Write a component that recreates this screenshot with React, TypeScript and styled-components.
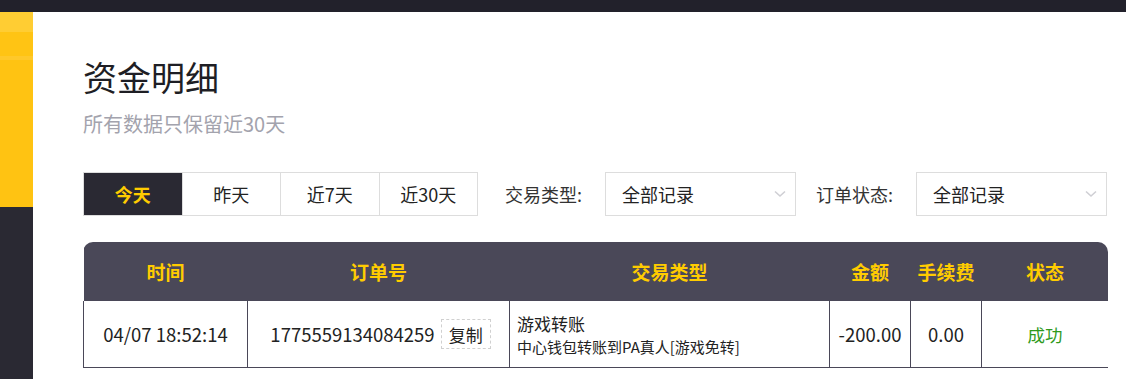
import React from "react";
import styled, { createGlobalStyle } from "styled-components";

const GlobalStyle = createGlobalStyle`
  html, body {
    margin: 0;
    padding: 0;
    background: #fff;
    font-family: "Noto Sans CJK SC", "Noto Sans", "Liberation Sans", sans-serif;
    color: #222;
  }
`;

const TopBar = styled.div`
  height: 12px;
  background: #22212b;
`;

const Layout = styled.div`
  display: flex;
  min-height: 367px;
`;

const Sidebar = styled.aside`
  width: 33px;
  flex-shrink: 0;
  display: flex;
  flex-direction: column;
`;

const SideYellow = styled.div`
  height: 195px;
  background: linear-gradient(
    to bottom,
    #ffcd33 0px,
    #ffcd33 20px,
    #ffc414 20px,
    #ffc414 44px,
    #ffc82a 44px,
    #ffc82a 48px,
    #ffc312 48px
  );
`;

const SideDark = styled.div`
  flex: 1;
  background: #2a2933;
`;

const Main = styled.main`
  flex: 1;
  min-width: 0;
  padding: 44px 0 0 50px;
`;

const Title = styled.h1`
  margin: 0;
  font-size: 34px;
  line-height: 41px;
  font-weight: 400;
  color: #1e1e24;
`;

const SubTitle = styled.p`
  margin: 14px 0 0;
  font-size: 20px;
  line-height: 26px;
  color: #a3a3ad;
`;

const FilterRow = styled.div`
  display: flex;
  align-items: center;
  margin-top: 35px;
  white-space: nowrap;
  & > * {
    flex-shrink: 0;
  }
`;

const Tabs = styled.div`
  display: flex;
  border: 1px solid #dddddd;
`;

const Tab = styled.div<{ $active?: boolean }>`
  width: 97.5px;
  height: 42px;
  display: flex;
  align-items: center;
  justify-content: center;
  font-size: 18px;
  background: ${(p) => (p.$active ? "#2a2933" : "#fff")};
  color: ${(p) => (p.$active ? "#ffcc00" : "#222")};
  font-weight: ${(p) => (p.$active ? 700 : 400)};
  & + & {
    border-left: 1px solid #dddddd;
  }
`;

const Label = styled.span<{ $gap: number }>`
  font-size: 18px;
  color: #333;
  margin: 0 23px 0 ${(p) => p.$gap}px;
`;

const Select = styled.div`
  height: 42px;
  width: 164px;
  border: 1px solid #dddddd;
  display: flex;
  align-items: center;
  justify-content: space-between;
  padding: 0 9px 0 16px;
  font-size: 18px;
  color: #222;
`;

const Chevron = () => (
  <svg width="12" height="8" viewBox="0 0 12 8">
    <path d="M1 1.5 L6 6 L11 1.5" fill="none" stroke="#cfcfd4" strokeWidth="1.6" />
  </svg>
);

const TableWrap = styled.div`
  margin-top: 26px;
  width: 1025px;
  border-radius: 10px 10px 0 0;
  overflow: hidden;
`;

const Table = styled.table`
  width: 100%;
  border-collapse: collapse;
  table-layout: fixed;
`;

const Th = styled.th`
  height: 59px;
  background: #4a4858;
  color: #ffcc00;
  font-size: 19px;
  font-weight: 700;
  padding: 0;
  text-align: center;
`;

const Td = styled.td<{ $align?: string }>`
  height: 66px;
  border: 1px solid #4a4858;
  border-top: none;
  padding: 0;
  text-align: ${(p) => p.$align || "center"};
  font-size: 18.5px;
  color: #222;
`;

const OrderCell = styled.div`
  display: flex;
  align-items: center;
  justify-content: center;
  gap: 6px;
  padding-left: 4px;
`;

const CopyButton = styled.span`
  display: inline-flex;
  align-items: center;
  justify-content: center;
  width: 48px;
  height: 28px;
  border: 1px dashed #d0d0d0;
  font-size: 17px;
  color: #222;
`;

const TypeCell = styled.div`
  padding: 0 7px;
  display: flex;
  flex-direction: column;
  gap: 2px;
`;

const TypeMain = styled.span`
  font-size: 17px;
  line-height: 23px;
`;

const TypeSub = styled.span`
  font-size: 15px;
  line-height: 20px;
`;

const Status = styled.span`
  color: #2f9a1d;
  font-size: 17.5px;
`;

const cols = [164, 262, 320, 81, 71, 127];
const tabs = ["今天", "昨天", "近7天", "近30天"];

export default function App() {
  return (
    <>
      <GlobalStyle />
      <TopBar />
      <Layout>
        <Sidebar>
          <SideYellow />
          <SideDark />
        </Sidebar>
        <Main>
          <Title>资金明细</Title>
          <SubTitle>所有数据只保留近30天</SubTitle>
          <FilterRow>
            <Tabs>
              {tabs.map((t, i) => (
                <Tab key={t} $active={i === 0}>
                  {t}
                </Tab>
              ))}
            </Tabs>
            <Label $gap={27}>交易类型:</Label>
            <Select>
              <span>全部记录</span>
              <Chevron />
            </Select>
            <Label $gap={20}>订单状态:</Label>
            <Select>
              <span>全部记录</span>
              <Chevron />
            </Select>
          </FilterRow>
          <TableWrap>
            <Table>
              <colgroup>
                {cols.map((w, i) => (
                  <col key={i} style={{ width: w }} />
                ))}
              </colgroup>
              <thead>
                <tr>
                  <Th>时间</Th>
                  <Th>订单号</Th>
                  <Th>交易类型</Th>
                  <Th>金额</Th>
                  <Th>手续费</Th>
                  <Th>状态</Th>
                </tr>
              </thead>
              <tbody>
                <tr>
                  <Td>04/07 18:52:14</Td>
                  <Td>
                    <OrderCell>
                      <span>1775559134084259</span>
                      <CopyButton>复制</CopyButton>
                    </OrderCell>
                  </Td>
                  <Td $align="left">
                    <TypeCell>
                      <TypeMain>游戏转账</TypeMain>
                      <TypeSub>中心钱包转账到PA真人[游戏免转]</TypeSub>
                    </TypeCell>
                  </Td>
                  <Td>-200.00</Td>
                  <Td>0.00</Td>
                  <Td>
                    <Status>成功</Status>
                  </Td>
                </tr>
              </tbody>
            </Table>
          </TableWrap>
        </Main>
      </Layout>
    </>
  );
}
